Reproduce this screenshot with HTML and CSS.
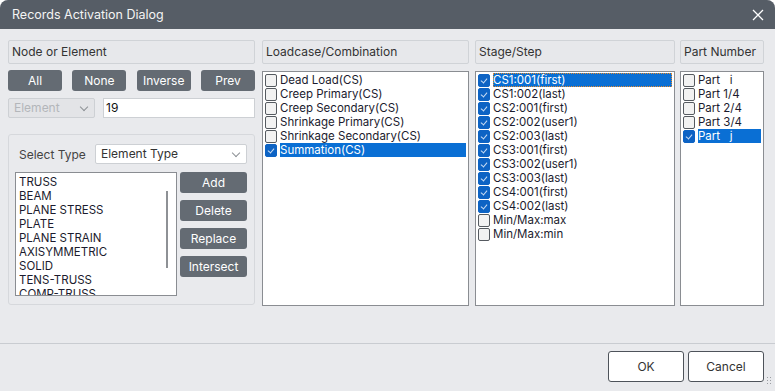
FILE: index.html
```html
<!DOCTYPE html>
<html>
<head>
    <title>Records Activation Dialog</title>
    <link rel="stylesheet" href="styles.css">
</head>
<body>
    <div class="dialog">
        <div class="titlebar">
            <span class="title">Records Activation Dialog</span>
            <svg class="close" width="12" height="12" viewBox="0 0 12 12">
                <path d="M1 1 L11 11 M11 1 L1 11" stroke="#ffffff" stroke-width="1.3" fill="none"/>
            </svg>
        </div>

        <div class="content">
            <div class="col col-node">
                <div class="header">Node or Element</div>
                <div class="button-row">
                    <button class="dark-button">All</button>
                    <button class="dark-button">None</button>
                    <button class="dark-button">Inverse</button>
                    <button class="dark-button">Prev</button>
                </div>
                <div class="input-row">
                    <div class="select disabled">Element <span class="caret"></span></div>
                    <div class="text-input">19</div>
                </div>
                <div class="group">
                    <div class="type-row">
                        <span class="type-label">Select Type</span>
                        <div class="select type-select">Element Type <span class="caret"></span></div>
                    </div>
                    <div class="type-body">
                        <div class="type-list">
                            <div>TRUSS</div>
                            <div>BEAM</div>
                            <div>PLANE STRESS</div>
                            <div>PLATE</div>
                            <div>PLANE STRAIN</div>
                            <div>AXISYMMETRIC</div>
                            <div>SOLID</div>
                            <div>TENS-TRUSS</div>
                            <div>COMP-TRUSS</div>
                            <span class="scroll-thumb"></span>
                        </div>
                        <div class="type-buttons">
                            <button class="dark-button">Add</button>
                            <button class="dark-button">Delete</button>
                            <button class="dark-button">Replace</button>
                            <button class="dark-button">Intersect</button>
                        </div>
                    </div>
                </div>
            </div>

            <div class="col col-load">
                <div class="header">Loadcase/Combination</div>
                <div class="check-list">
                    <div class="item"><span class="box"></span><span class="label">Dead Load(CS)</span></div>
                    <div class="item"><span class="box"></span><span class="label">Creep Primary(CS)</span></div>
                    <div class="item"><span class="box"></span><span class="label">Creep Secondary(CS)</span></div>
                    <div class="item"><span class="box"></span><span class="label">Shrinkage Primary(CS)</span></div>
                    <div class="item"><span class="box"></span><span class="label">Shrinkage Secondary(CS)</span></div>
                    <div class="item selected"><span class="box checked"></span><span class="label">Summation(CS)</span></div>
                </div>
            </div>

            <div class="col col-stage">
                <div class="header">Stage/Step</div>
                <div class="check-list">
                    <div class="item selected focus"><span class="box checked"></span><span class="label">CS1:001(first)</span></div>
                    <div class="item"><span class="box checked"></span><span class="label">CS1:002(last)</span></div>
                    <div class="item"><span class="box checked"></span><span class="label">CS2:001(first)</span></div>
                    <div class="item"><span class="box checked"></span><span class="label">CS2:002(user1)</span></div>
                    <div class="item"><span class="box checked"></span><span class="label">CS2:003(last)</span></div>
                    <div class="item"><span class="box checked"></span><span class="label">CS3:001(first)</span></div>
                    <div class="item"><span class="box checked"></span><span class="label">CS3:002(user1)</span></div>
                    <div class="item"><span class="box checked"></span><span class="label">CS3:003(last)</span></div>
                    <div class="item"><span class="box checked"></span><span class="label">CS4:001(first)</span></div>
                    <div class="item"><span class="box checked"></span><span class="label">CS4:002(last)</span></div>
                    <div class="item"><span class="box"></span><span class="label">Min/Max:max</span></div>
                    <div class="item"><span class="box"></span><span class="label">Min/Max:min</span></div>
                </div>
            </div>

            <div class="col col-part">
                <div class="header">Part Number</div>
                <div class="check-list">
                    <div class="item"><span class="box"></span><span class="label">Part &nbsp; i</span></div>
                    <div class="item"><span class="box"></span><span class="label">Part 1/4</span></div>
                    <div class="item"><span class="box"></span><span class="label">Part 2/4</span></div>
                    <div class="item"><span class="box"></span><span class="label">Part 3/4</span></div>
                    <div class="item selected"><span class="box checked"></span><span class="label">Part &nbsp; j</span></div>
                </div>
            </div>
        </div>

        <div class="footer">
            <button class="light-button">OK</button>
            <button class="light-button">Cancel</button>
            <span class="grip"></span>
        </div>
    </div>
</body>
</html>
```

FILE: styles.css
```css
body {
    margin: 0;
    background-color: #ffffff;
    font-family: Inter, 'Noto Sans', sans-serif;
    color: #222;
}

.dialog {
    width: 775px;
    height: 391px;
    background-color: #e9eaed;
    border-radius: 8px 8px 0 0;
    overflow: hidden;
    display: flex;
    flex-direction: column;
}

.titlebar {
    height: 29px;
    background-color: #565d66;
    display: flex;
    align-items: center;
    justify-content: space-between;
    padding: 0 11px 0 12px;
    flex-shrink: 0;
}

.title {
    color: #f4f4f4;
    font-size: 12.5px;
}

.content {
    display: flex;
    padding: 11px 11px 0 8px;
    height: 266px;
}

.col {
    display: flex;
    flex-direction: column;
}

.col-node {
    width: 247px;
    margin-right: 7px;
}

.col-load {
    width: 207px;
    margin-right: 6px;
}

.col-stage {
    width: 200px;
    margin-right: 5px;
}

.col-part {
    width: 84px;
}

.header {
    height: 22px;
    line-height: 22px;
    border: 1px solid #d0d3d7;
    border-radius: 2px;
    background-color: #e7e8eb;
    padding-left: 3px;
    font-size: 12px;
    color: #333;
    margin-bottom: 7px;
    flex-shrink: 0;
}

.dark-button {
    background-color: #646b73;
    color: #fff;
    border: none;
    border-radius: 3px;
    font-family: inherit;
    font-size: 12px;
    padding: 0;
    height: 21px;
}

.button-row {
    display: flex;
    justify-content: space-between;
    margin-bottom: 7px;
}

.col-node .button-row {
    margin-top: -1px;
}

.button-row .dark-button {
    width: 54px;
}

.input-row {
    display: flex;
    justify-content: space-between;
    height: 20px;
    margin-bottom: 16px;
}

.select {
    position: relative;
    box-sizing: border-box;
    height: 20px;
    line-height: 18px;
    border: 1px solid #cdd0d4;
    border-radius: 2px;
    background-color: #fff;
    font-size: 12px;
    padding-left: 5px;
    color: #333;
}

.select.disabled {
    width: 87px;
    background-color: #e3e4e7;
    color: #b3b6ba;
}

.caret {
    position: absolute;
    right: 7px;
    top: 5px;
    width: 5px;
    height: 5px;
    border-right: 1.5px solid #8d9196;
    border-bottom: 1.5px solid #8d9196;
    transform: rotate(45deg);
}

.text-input {
    box-sizing: border-box;
    width: 152px;
    height: 20px;
    line-height: 18px;
    border: 1px solid #cdd0d4;
    background-color: #fff;
    font-size: 12px;
    padding-left: 2px;
    color: #111;
}

.group {
    box-sizing: border-box;
    height: 171px;
    border: 1px solid #d6d8dc;
    border-radius: 3px;
    padding: 9px 7px 0 6px;
}

.type-row {
    display: flex;
    align-items: center;
    margin-bottom: 8px;
}

.type-label {
    font-size: 12px;
    color: #444;
    width: 76px;
    padding-left: 4px;
    flex-shrink: 0;
}

.type-select {
    flex: 1;
}

.type-body {
    display: flex;
    justify-content: space-between;
}

.type-list {
    position: relative;
    box-sizing: border-box;
    width: 162px;
    height: 124px;
    border: 1px solid #8a8d92;
    background-color: #fff;
    overflow: hidden;
    padding: 2px 0 0 3px;
    font-size: 11.5px;
    line-height: 14px;
    color: #1b1b2e;
}

.scroll-thumb {
    position: absolute;
    left: 150px;
    top: 18px;
    width: 2px;
    height: 77px;
    background-color: #8e9195;
}

.type-buttons {
    display: flex;
    flex-direction: column;
    gap: 7px;
}

.type-buttons .dark-button {
    width: 67px;
}

.check-list {
    box-sizing: border-box;
    height: 235px;
    border: 1px solid #8a8d92;
    background-color: #fff;
    padding: 1px 1px 0 2px;
}

.item {
    display: flex;
    align-items: center;
    height: 14px;
    font-size: 11.5px;
    color: #1b1b2e;
}

.box {
    box-sizing: border-box;
    width: 12px;
    height: 13px;
    border: 1px solid #555a60;
    border-radius: 2px;
    background-color: #f2f2f2;
    margin-right: 3px;
    flex-shrink: 0;
    position: relative;
}

.box.checked {
    background-color: #0d63c4;
    border-color: #0d63c4;
}

.box.checked::after {
    content: "";
    position: absolute;
    left: 3px;
    top: 2px;
    width: 3px;
    height: 5px;
    border-right: 1px solid #c9dcf3;
    border-bottom: 1px solid #c9dcf3;
    transform: rotate(40deg);
}

.label {
    flex: 1;
    height: 14px;
    line-height: 14px;
    white-space: nowrap;
    margin-right: 1px;
}

.item.selected .label {
    background-color: #0a6fd4;
    color: #fff;
}

.item.focus .label {
    outline: 1px dotted #e38a2e;
    outline-offset: -1px;
}

.footer {
    position: relative;
    margin-top: 37px;
    border-top: 1px solid #c9ccd1;
    padding: 7px 11px 0 0;
    display: flex;
    justify-content: flex-end;
    gap: 4px;
    flex: 1;
}

.light-button {
    width: 76px;
    height: 31px;
    background-color: #fff;
    border: 1px solid #4e535a;
    border-radius: 3px;
    font-family: inherit;
    font-size: 12px;
    color: #333;
}

.grip {
    position: absolute;
    right: 3px;
    bottom: 5px;
    width: 6px;
    height: 10px;
    background-image: radial-gradient(#9a9da2 0.8px, transparent 1px);
    background-size: 3px 3px;
}
```
